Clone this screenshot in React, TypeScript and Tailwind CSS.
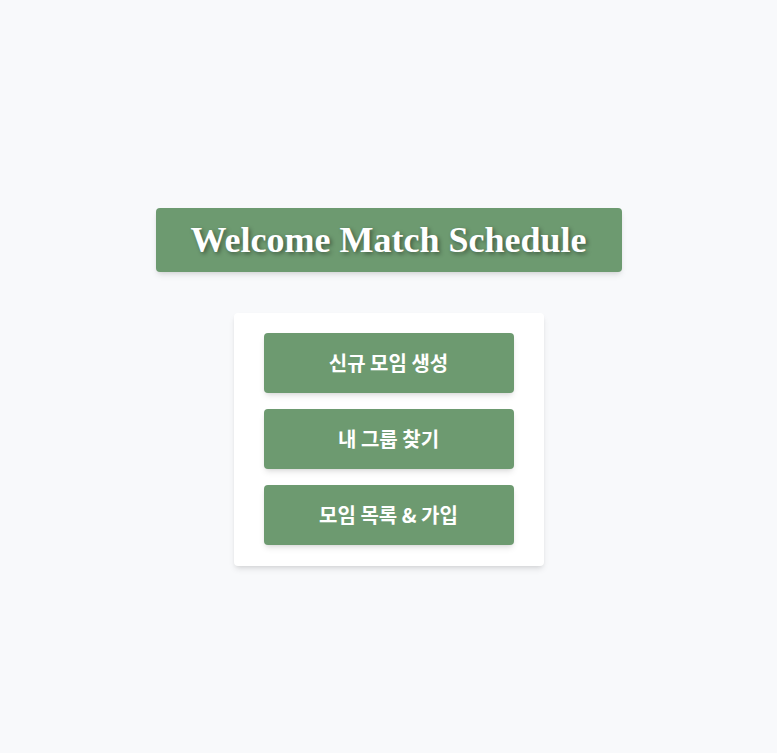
export default function App() {
  const items = ["신규 모임 생성", "내 그룹 찾기", "모임 목록 & 가입"];
  return (
    <div className="flex h-screen w-full flex-col items-center justify-center bg-[#f8f9fb] pt-[21px]">
      <div className="flex h-16 w-[466px] items-center justify-center rounded bg-[#6d9a70] shadow-md">
        <h1 className="font-['Liberation_Serif',serif] text-[36px] font-bold text-white [text-shadow:2px_2px_4px_rgba(0,0,0,0.4)]">
          Welcome Match Schedule
        </h1>
      </div>
      <div className="mt-[41px] flex w-[310px] flex-col gap-4 rounded bg-white px-[30px] pt-5 pb-[21px] shadow-md">
        {items.map((label) => (
          <button
            key={label}
            className="flex h-[60px] w-full items-center justify-center rounded bg-[#6d9a70] font-['Noto_Sans_CJK_KR',sans-serif] text-xl font-bold text-white shadow-md"
          >
            {label}
          </button>
        ))}
      </div>
    </div>
  );
}
